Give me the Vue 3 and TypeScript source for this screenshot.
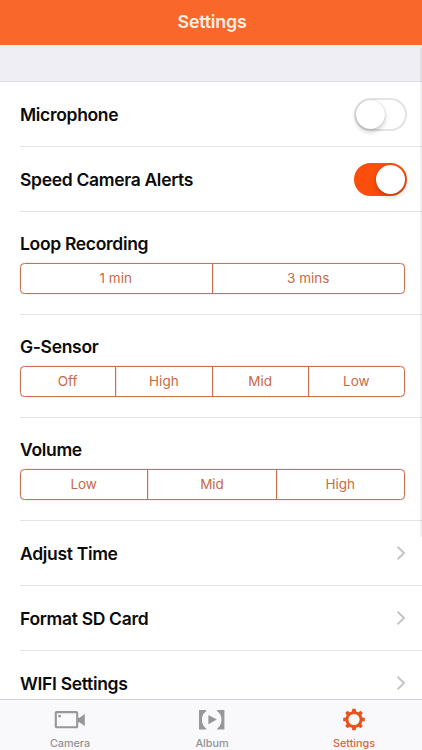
<script setup lang="ts">
import { ref } from 'vue'

interface Toggle { label: string; on: boolean }
interface Choice { label: string; key: string; options: string[] }

const toggles = ref<Toggle[]>([
  { label: 'Microphone', on: false },
  { label: 'Speed Camera Alerts', on: true },
])

const choices: Choice[] = [
  { label: 'Loop Recording', key: 'loop', options: ['1 min', '3 mins'] },
  { label: 'G-Sensor', key: 'sensor', options: ['Off', 'High', 'Mid', 'Low'] },
  { label: 'Volume', key: 'volume', options: ['Low', 'Mid', 'High'] },
]

const links: string[] = ['Adjust Time', 'Format SD Card', 'WIFI Settings']
const teeth: number[] = [0, 45, 90, 135, 180, 225, 270, 315]
</script>

<template>
  <div class="screen">
    <header class="navbar">Settings</header>
    <main class="content">
      <div class="spacer"></div>
      <div v-for="t in toggles" :key="t.label" class="row">
        <span class="title">{{ t.label }}</span>
        <button class="switch" :class="{ on: t.on }" role="switch" :aria-checked="t.on" @click="t.on = !t.on">
          <span class="knob"></span>
        </button>
      </div>
      <div v-for="c in choices" :key="c.key" class="row choice">
        <span class="title">{{ c.label }}</span>
        <div class="segments">
          <button v-for="o in c.options" :key="o" class="segment">{{ o }}</button>
        </div>
      </div>
      <div v-for="l in links" :key="l" class="row">
        <span class="title">{{ l }}</span>
        <svg class="chevron" width="10" height="16" viewBox="0 0 10 16">
          <path d="M1.6 1.8 8 8l-6.4 6.2" fill="none" stroke="#c5c5ca" stroke-width="2" />
        </svg>
      </div>
      <div class="scrollbar"></div>
    </main>
    <nav class="tabbar">
      <div class="tab">
        <svg width="32" height="24" viewBox="0 0 32 24">
          <rect x="1.8" y="4.1" width="21.4" height="15.2" rx="0.8" fill="none" stroke="#979797" stroke-width="2.1" />
          <circle cx="5.7" cy="8.1" r="1.4" fill="#979797" />
          <path d="M24 9.8h1.4L30.8 6v12.2l-5.4-4H24z" fill="#979797" />
        </svg>
        <span>Camera</span>
      </div>
      <div class="tab">
        <svg width="32" height="24" viewBox="0 0 32 24">
          <path d="M3 2h7.2v1.2Q5.9 6 5.9 11.8T10.2 20.4v1.2H3zM28.4 2h-7.2v1.2Q25.5 6 25.5 11.8T21.2 20.4v1.2h7.2z" fill="#979797" />
          <path d="M12.4 7 20.8 11.6l-8.4 4.6z" fill="#979797" />
        </svg>
        <span>Album</span>
      </div>
      <div class="tab active">
        <svg width="32" height="24" viewBox="0 0 32 24">
          <circle cx="16" cy="11.5" r="7.1" fill="none" stroke="#e6531c" stroke-width="3" />
          <path v-for="a in teeth" :key="a" d="M13.9 4.3 14.3.7h3.4l.4 3.6z" fill="#e6531c" :transform="`rotate(${a} 16 11.5)`" />
        </svg>
        <span>Settings</span>
      </div>
    </nav>
  </div>
</template>

<style>
body { margin: 0; overflow: hidden; }
</style>

<style scoped>
.screen {
  width: 422px;
  height: 750px;
  display: flex;
  flex-direction: column;
  overflow: hidden;
  background: #fff;
  font-family: Inter, "Liberation Sans", sans-serif;
}
.navbar {
  flex: none;
  height: 45px;
  box-sizing: border-box;
  padding-left: 2px;
  background: #fa672b;
  color: #fff0e4;
  font-size: 17.8px;
  font-weight: 600;
  letter-spacing: -0.2px;
  line-height: 43px;
  text-align: center;
}
.content {
  position: relative;
  flex: 1;
  min-height: 0;
  overflow: hidden;
}
.spacer {
  height: 36px;
  background: #efeef4;
  border-bottom: 1px solid #dfdfe4;
}
.row {
  display: flex;
  align-items: center;
  justify-content: space-between;
  height: 65.1px;
  box-sizing: border-box;
  margin-left: 20px;
  padding-right: 15px;
  border-bottom: 1px solid #e4e4e6;
}
.choice {
  height: 103px;
  flex-direction: column;
  align-items: stretch;
  justify-content: flex-start;
  padding: 21px 17px 0 0;
}
.title {
  padding-top: 1px;
  color: #0b0b0b;
  font-size: 17.5px;
  font-weight: 600;
  letter-spacing: -0.32px;
  line-height: 22px;
  white-space: nowrap;
}
.choice .title { padding-top: 0; }
.switch {
  width: 53px;
  height: 33px;
  box-sizing: border-box;
  padding: 0;
  display: flex;
  align-items: center;
  border: 2px solid #e3e3e3;
  border-radius: 17px;
  background: #fff;
}
.switch.on {
  justify-content: flex-end;
  border-color: #fb4e0c;
  background: #fb4e0c;
}
.knob {
  width: 29px;
  height: 29px;
  border-radius: 50%;
  background: #fff;
  box-shadow: 0 3px 5px rgba(0, 0, 0, 0.2), 0 0 1px rgba(0, 0, 0, 0.3);
}
.segments {
  display: flex;
  height: 31px;
  box-sizing: border-box;
  margin-top: 8px;
  border: 1px solid #ca704e;
  box-shadow: 0 0 1px #ca704e;
  border-radius: 4.5px;
}
.segment {
  flex: 1 1 0;
  min-width: 0;
  padding: 0;
  border: 0;
  background: none;
  color: #cb6843;
  font: 400 13.5px/29px Inter, "Liberation Sans", sans-serif;
}
.segment:first-child { margin-left: -1px; }
.segment:not(:last-child) {
  border-right: 1px solid #ca704e;
  box-shadow: 1px 0 0 -0.5px rgba(202, 112, 78, 0.4);
}
.chevron { margin-right: 1.2px; }
.scrollbar {
  position: absolute;
  top: 3px;
  right: 0;
  width: 2px;
  height: 489px;
  background: rgba(0, 0, 0, 0.06);
}
.tabbar {
  flex: none;
  display: grid;
  grid-template-columns: repeat(3, 142px);
  justify-content: center;
  height: 51px;
  box-sizing: border-box;
  padding-left: 2px;
  border-top: 1px solid #d6d6d8;
  background: #f9f9fb;
}
.tab {
  display: flex;
  flex-direction: column;
  align-items: center;
  padding-top: 8px;
  color: #929292;
  font-size: 10.8px;
  font-weight: 500;
  line-height: 14px;
}
.tab svg { flex: none; margin-bottom: 5px; }
.active { color: #da653c; }
</style>
